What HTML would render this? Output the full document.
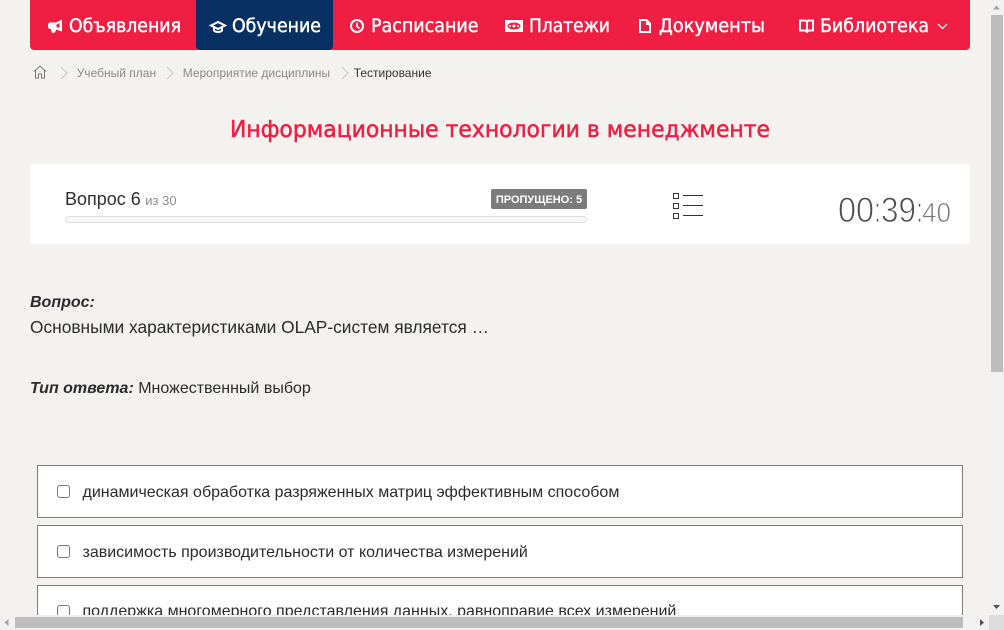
<!DOCTYPE html>
<html lang="ru"><head><meta charset="utf-8"><title>Тестирование</title>
<style>
html,body{margin:0;padding:0;width:1004px;height:630px;overflow:hidden;background:#f3f2ef;font-family:"Liberation Sans",sans-serif;color:#292b2c}
.a{position:absolute;white-space:nowrap}
#main{position:absolute;left:0;top:0;width:1004px;height:630px;overflow:hidden}
.card{position:absolute;left:37px;width:924px;height:51px;background:#fff;border:1px solid #7d7d7d}
.cb{position:absolute;left:19px;top:19px;width:11px;height:11px;border:1px solid #767676;border-radius:3px;background:#fff}
.ct{position:absolute;left:44.500px;top:18px;font-size:16px;line-height:18px;white-space:nowrap;color:#2b2b2b}
.bc{font-size:12px;line-height:14px;color:#8a8a8a;top:66px}
svg{position:absolute;overflow:visible}
</style></head><body>
<div id="main">
<div class="a" style="left:30px;top:0;width:940px;height:50px;background:#f01e42;border-radius:0 0 4px 4px"></div>
<div class="a" style="left:196px;top:0;width:137px;height:50px;background:#083063;border-radius:0 0 4px 4px"></div>
<svg style="left:0;top:0" width="1004" height="60" font-family="'DejaVu Sans','Liberation Sans',sans-serif" font-size="19" fill="#fff" stroke="#fff" stroke-width=".45">
<text x="69" y="32" textLength="112" lengthAdjust="spacingAndGlyphs">Объявления</text>
<text x="232" y="32" textLength="89" lengthAdjust="spacingAndGlyphs">Обучение</text>
<text x="371" y="32" textLength="107.500" lengthAdjust="spacingAndGlyphs">Расписание</text>
<text x="529" y="32" textLength="81" lengthAdjust="spacingAndGlyphs">Платежи</text>
<text x="659" y="32" textLength="106" lengthAdjust="spacingAndGlyphs">Документы</text>
<text x="820" y="32" textLength="109" lengthAdjust="spacingAndGlyphs">Библиотека</text>
<g stroke="none">
<path fill-rule="evenodd" d="M62 19.500V31.500L56 29.500V30l-1 2.500-3 .5-1-4h-1.500L48 27.500V24l1.500-1.500H56zM59.500 23L56.500 24.500V27L59.500 28z" fill="#fff"/>
</g>
<path d="M211 25.500l7-3.500 7 3.500-7 3.500zM214 27.500v3c1.500 2 6.500 2 8 0v-3" fill="none" stroke="#fff" stroke-width="2"/>
<circle cx="357" cy="26" r="6" fill="none" stroke="#fff" stroke-width="2"/><path d="M357 22.500v4l2.500 2" fill="none" stroke="#fff" stroke-width="1.600"/>
<g stroke="none"><rect x="505" y="20" width="18" height="12" fill="#fff"/><ellipse cx="514" cy="26" rx="6.500" ry="3.500" fill="#f01e42"/><circle cx="514" cy="26" r="1.500" fill="#fff"/><circle cx="510" cy="26" r="1" fill="#fff"/><circle cx="518" cy="26" r="1" fill="#fff"/></g>
<path d="M640 20h6.500l3.500 3.500V32H640z" fill="none" stroke="#fff" stroke-width="2"/><path d="M646 20v5h5z" fill="#fff" stroke="none"/>
<path d="M800 20.500h5.500l1.500 1 1.500-1h4.500v10h-4.500l-1.500 1.500-1.500-1.500h-5.500zM807 22v9" fill="none" stroke="#fff" stroke-width="2"/>
<path d="M938 24l4.500 4.500 4.500-4.500" fill="none" stroke="#fff" stroke-width="1.200"/>
<path d="M34 71.500l6-5.500 6 5.500M35.500 70.500V78h3v-4h3v4h3v-7.500" fill="none" stroke="#777" stroke-width="1"/>
<path d="M61 67l6 6-6 6M167 67l6 6-6 6M342 67l6 6-6 6" fill="none" stroke="#c4c4c4" stroke-width="1"/>
</svg>
<div class="a bc" style="left:76.700px">Учебный план</div>
<div class="a bc" style="left:182.700px">Мероприятие дисциплины</div>
<div class="a bc" style="left:353.700px;color:#333">Тестирование</div>
<svg style="left:0;top:110px" width="1004" height="40"><text x="230" y="27" textLength="540" lengthAdjust="spacingAndGlyphs" font-family="'DejaVu Sans',sans-serif" font-size="23" fill="#f01e42" stroke="#f01e42" stroke-width=".5">Информационные технологии в менеджменте</text></svg>
<div class="a" style="left:30px;top:164px;width:940px;height:80px;background:#fff"></div>
<div class="a" style="left:65px;top:188px;font-size:18px;line-height:22px;color:#2f2f2f">Вопрос 6<span style="font-size:13px;color:#8c8c8c;margin-left:4.500px">из 30</span></div>
<div class="a" style="left:491px;top:189px;width:96px;height:20px;background:#7b7b7b;border-radius:2px;color:#fff;font-size:11px;font-weight:700;line-height:22px;text-align:center">ПРОПУЩЕНО: 5</div>
<div class="a" style="left:65px;top:216px;width:520px;height:5px;background:#f7f7f7;border:1px solid #dedede;border-radius:4px"></div>
<svg style="left:672px;top:192px" width="32" height="28" fill="none" stroke="#333" stroke-width="1">
<rect x="1.500" y="1.500" width="5" height="5"/><rect x="1.500" y="11.500" width="5" height="5"/><rect x="1.500" y="21.500" width="5" height="5"/>
<path d="M11 3.500h20M11 13.500h20M11 23.500h20"/></svg>
<svg style="left:0;top:0" width="1004" height="630" font-family="'Liberation Sans',sans-serif" stroke="#fff">
<g font-size="35.500" fill="#4f4f4f" stroke-width=".9">
<text x="838" y="222" textLength="36" lengthAdjust="spacingAndGlyphs">00</text>
<text x="874.500" y="222" textLength="6" lengthAdjust="spacingAndGlyphs">:</text>
<text x="881" y="222" textLength="35" lengthAdjust="spacingAndGlyphs">39</text>
<text x="916.500" y="222" textLength="6" lengthAdjust="spacingAndGlyphs">:</text>
</g>
<text x="922" y="222" textLength="29" lengthAdjust="spacingAndGlyphs" font-size="28" fill="#7a7a7a" stroke-width=".7">40</text>
</svg>
<div class="a" style="left:30px;top:293px;font-size:16px;line-height:20px;font-weight:700;font-style:italic">Вопрос:</div>
<div class="a" style="left:30px;top:317px;font-size:17.330px;line-height:20px">Основными характеристиками OLAP-систем является …</div>
<div class="a" style="left:30px;top:379px;font-size:16px;line-height:20px"><b><i>Тип ответа:</i></b> Множественный выбор</div>
<div class="card" style="top:465px"><span class="cb"></span><span class="ct">динамическая обработка разряженных матриц эффективным способом</span></div>
<div class="card" style="top:525px"><span class="cb"></span><span class="ct">зависимость производительности от количества измерений</span></div>
<div class="card" style="top:585px"><span class="cb"></span><span class="ct" style="top:17px">поддержка многомерного представления данных, равноправие всех измерений</span></div>
<div class="a" style="left:989px;top:0;width:15px;height:615px;background:#f1f1f1"></div>
<div class="a" style="left:991px;top:15px;width:12px;height:357px;background:#bdbdbd"></div>
<div class="a" style="left:0;top:615px;width:989px;height:15px;background:#f1f1f1"></div>
<div class="a" style="left:15px;top:617px;width:948px;height:11px;background:#bdbdbd"></div>
<div class="a" style="left:989px;top:615px;width:15px;height:15px;background:#dcdcdc"></div>
<svg style="left:0;top:0" width="1004" height="630">
<path d="M993 9.500l3.500-4 3.500 4z" fill="#a3a3a3"/>
<path d="M993 605h7l-3.500 4z" fill="#505050"/>
<path d="M8.500 619v7l-4-3.500z" fill="#a3a3a3"/>
<path d="M980 619v7l4-3.500z" fill="#505050"/>
</svg>
</div>
</body></html>
